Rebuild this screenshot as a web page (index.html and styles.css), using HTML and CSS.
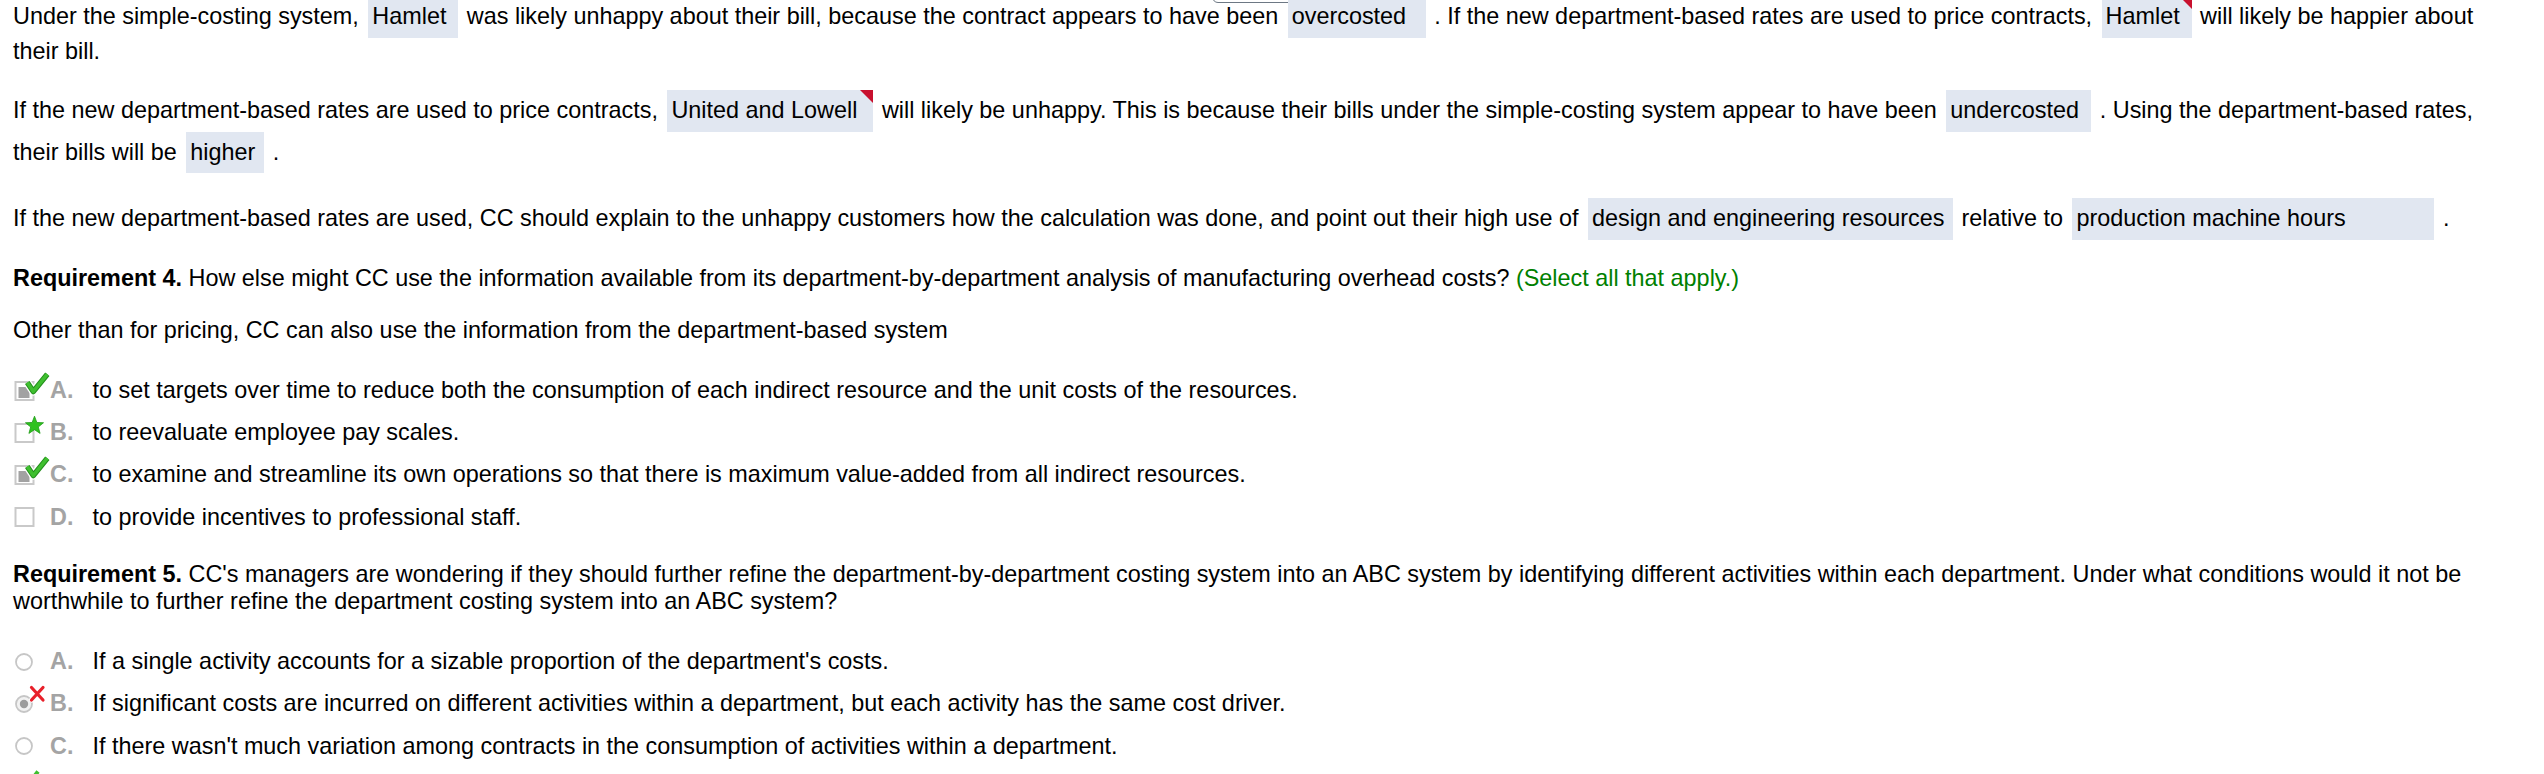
FILE: index.html
```html
<!DOCTYPE html>
<html lang="en">
<head>
<meta charset="utf-8">
<title>Requirements</title>
<link rel="stylesheet" href="styles.css">
</head>
<body>
<div class="tip-edge"></div>
<main class="q">
  <p class="para">Under the simple-costing system, <span class="ans w-hamlet">Hamlet</span> was likely unhappy about their bill, because the contract appears to have been <span class="ans w-over">overcosted</span> . If the new department-based rates are used to price contracts, <span class="ans w-hamlet wrong">Hamlet</span> will likely be happier about their bill.</p>
  <p class="para">If the new department-based rates are used to price contracts, <span class="ans w-united wrong">United and Lowell</span> will likely be unhappy. This is because their bills under the simple-costing system appear to have been <span class="ans w-under">undercosted</span> . Using the department-based rates, their bills will be <span class="ans w-higher">higher</span> .</p>
  <p class="para">If the new department-based rates are used, CC should explain to the unhappy customers how the calculation was done, and point out their high use of <span class="ans w-design">design and engineering resources</span> relative to <span class="ans w-prod">production machine hours</span> .</p>
  <p class="para"><b>Requirement 4.</b> How else might CC use the information available from its department-by-department analysis of manufacturing overhead costs? <span class="hint">(Select all that apply.)</span></p>
  <p class="para">Other than for pricing, CC can also use the information from the department-based system</p>
  <ul class="opts opts-first">
    <li class="opt">
      <svg class="ic" viewBox="0 0 36 42" width="36" height="42">
        <rect x="1.5" y="12" width="18" height="18" fill="#fff" stroke="#c9c9c9" stroke-width="2"/>
        <rect x="4.5" y="17" width="11" height="11" fill="#a2a2a2"/>
        <path d="M13.3 12.5 L19.3 21.5 L33.3 4.2" fill="none" stroke="#fff" stroke-width="8" stroke-linejoin="round"/>
        <path d="M13.3 12.5 L19.3 21.5 L33.3 4.2" fill="none" stroke="#238f1c" stroke-width="5.5" stroke-linejoin="round"/>
        <path d="M13.3 12.5 L19.3 21.5 L33.3 4.2" fill="none" stroke="#3fbf2f" stroke-width="3.5" stroke-linejoin="round"/>
      </svg>
      <span class="lbl">A.</span><span class="txt">to set targets over time to reduce both the consumption of each indirect resource and the unit costs of the resources.</span>
    </li>
    <li class="opt">
      <svg class="ic" viewBox="0 0 36 42" width="36" height="42">
        <rect x="1.5" y="12" width="18" height="18" fill="#fff" stroke="#c9c9c9" stroke-width="2"/>
        <path d="M20.5 4.2 L22.85 10.46 L29.53 10.76 L24.3 14.94 L26.09 21.39 L20.5 17.7 L14.91 21.39 L16.7 14.94 L11.47 10.76 L18.15 10.46 Z" fill="#2fc21f" stroke="#1f9a16" stroke-width="0.8" stroke-linejoin="round"/>
      </svg>
      <span class="lbl">B.</span><span class="txt">to reevaluate employee pay scales.</span>
    </li>
    <li class="opt">
      <svg class="ic" viewBox="0 0 36 42" width="36" height="42">
        <rect x="1.5" y="12" width="18" height="18" fill="#fff" stroke="#c9c9c9" stroke-width="2"/>
        <rect x="4.5" y="17" width="11" height="11" fill="#a2a2a2"/>
        <path d="M13.3 12.5 L19.3 21.5 L33.3 4.2" fill="none" stroke="#fff" stroke-width="8" stroke-linejoin="round"/>
        <path d="M13.3 12.5 L19.3 21.5 L33.3 4.2" fill="none" stroke="#238f1c" stroke-width="5.5" stroke-linejoin="round"/>
        <path d="M13.3 12.5 L19.3 21.5 L33.3 4.2" fill="none" stroke="#3fbf2f" stroke-width="3.5" stroke-linejoin="round"/>
      </svg>
      <span class="lbl">C.</span><span class="txt">to examine and streamline its own operations so that there is maximum value-added from all indirect resources.</span>
    </li>
    <li class="opt">
      <svg class="ic" viewBox="0 0 36 42" width="36" height="42">
        <rect x="1.5" y="12" width="18" height="18" fill="#fff" stroke="#c9c9c9" stroke-width="2"/>
      </svg>
      <span class="lbl">D.</span><span class="txt">to provide incentives to professional staff.</span>
    </li>
  </ul>
  <p class="para"><b>Requirement 5.</b> CC's managers are wondering if they should further refine the department-by-department costing system into an ABC system by identifying different activities within each department. Under what conditions would it not be worthwhile to further refine the department costing system into an ABC system?</p>
  <ul class="opts">
    <li class="opt">
      <svg class="ic" viewBox="0 0 36 42" width="36" height="42">
        <circle cx="10" cy="21" r="8" fill="#fff" stroke="#c6c6c6" stroke-width="1.8"/>
      </svg>
      <span class="lbl">A.</span><span class="txt">If a single activity accounts for a sizable proportion of the department's costs.</span>
    </li>
    <li class="opt">
      <svg class="ic" viewBox="0 0 36 42" width="36" height="42">
        <circle cx="10" cy="21" r="8" fill="#f2f2f2" stroke="#c6c6c6" stroke-width="1.8"/>
        <circle cx="10" cy="21" r="4.2" fill="#9c9c9c"/>
        <path d="M17.5 4.5 L29 17 M29 4.5 L17.5 17" fill="none" stroke="#fff" stroke-width="5" stroke-linecap="round"/>
        <path d="M17.5 4.5 L29 17 M29 4.5 L17.5 17" fill="none" stroke="#e8202a" stroke-width="3.2" stroke-linecap="round"/>
      </svg>
      <span class="lbl">B.</span><span class="txt">If significant costs are incurred on different activities within a department, but each activity has the same cost driver.</span>
    </li>
    <li class="opt">
      <svg class="ic" viewBox="0 0 36 42" width="36" height="42">
        <circle cx="10" cy="21" r="8" fill="#fff" stroke="#c6c6c6" stroke-width="1.8"/>
      </svg>
      <span class="lbl">C.</span><span class="txt">If there wasn't much variation among contracts in the consumption of activities within a department.</span>
    </li>
    <li class="opt">
      <svg class="ic" viewBox="0 0 36 42" width="36" height="42">
        <circle cx="10" cy="21" r="8" fill="#fff" stroke="#c6c6c6" stroke-width="1.8"/>
        <path d="M7 12 L12 20 L24 4.5" fill="none" stroke="#3fbf2f" stroke-width="4" stroke-linejoin="round"/>
      </svg>
    </li>
  </ul>
</main>
</body>
</html>
```

FILE: styles.css
```css
html, body {
  margin: 0;
  padding: 0;
  background: #ffffff;
}

body {
  position: relative;
  height: 774px;
  overflow: hidden;
  font-family: "Liberation Sans", Arial, Helvetica, sans-serif;
  font-size: 23.4px;
  line-height: 27.5px;
  color: #000000;
}

.tip-edge {
  position: absolute;
  top: -38px;
  left: 1212px;
  width: 103px;
  height: 41px;
  box-sizing: border-box;
  border: 1.5px solid #6d7884;
  border-radius: 6px;
  background: #ffffff;
}

.q {
  display: flex;
  flex-direction: column;
  gap: 25px;
  margin-top: -4px;
  padding: 0 49px 0 13px;
}

.para {
  margin: 0;
}

.para b {
  font-weight: bold;
}

.hint {
  color: #008000;
}

.ans {
  position: relative;
  display: inline-block;
  box-sizing: border-box;
  padding: 7px 4px;
  margin: 0 2px 0 3px;
  background: #e1e7f1;
  white-space: nowrap;
}

.ans.wrong::after {
  content: "";
  position: absolute;
  top: 0;
  right: 0;
  width: 0;
  height: 0;
  border-style: solid;
  border-width: 0 13px 13px 0;
  border-color: transparent #c8102e transparent transparent;
}

.w-hamlet { width: 90px; }
.w-over { width: 138px; }
.w-united { width: 206px; }
.w-under { width: 145px; }
.w-higher { width: 78px; }
.w-design { width: 365px; }
.w-prod { width: 362px; }

.opts {
  list-style: none;
  margin: 0;
  padding: 0;
}

.opts-first {
  margin-bottom: -3px;
}

.opt {
  display: flex;
  align-items: flex-start;
  padding: 7.4px 0;
}

.ic {
  flex: none;
  width: 36px;
  height: 42px;
  margin: -7.4px 0 -7.4px 1px;
  overflow: visible;
}

.lbl {
  flex: none;
  width: 42.5px;
  color: #a4a4a4;
  font-weight: bold;
}

.txt {
  flex: 1;
}
```
